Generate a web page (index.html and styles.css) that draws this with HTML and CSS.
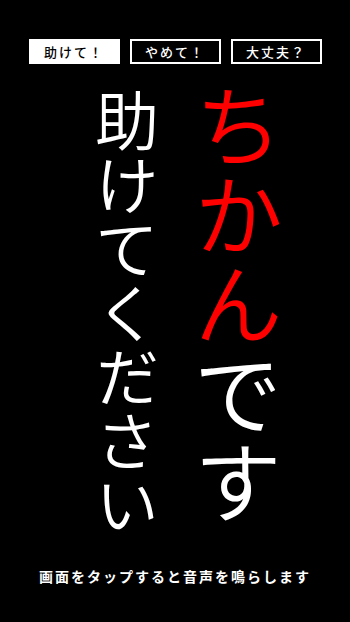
FILE: index.html
```html
<!DOCTYPE html>
<html lang="ja">
<head>
    <meta charset="UTF-8">
    <meta name="viewport" content="width=device-width, initial-scale=1.0">
    <title>ちかんです</title>
    <link rel="stylesheet" href="styles.css">
</head>
<body>

    <div class="tabs">
        <button class="tab active">助けて！</button>
        <button class="tab">やめて！</button>
        <button class="tab">大丈夫？</button>
    </div>

    <div class="message">
        <div class="line small">助けてください</div>
        <div class="line big"><span class="red">ちかん</span>です</div>
    </div>

    <div class="hint">画面をタップすると音声を鳴らします</div>

</body>
</html>
```
FILE: styles.css
```css
body {
    margin: 0;
    background: #000;
    color: #fff;
    font-family: "Noto Sans CJK JP", sans-serif;
    height: 622px;
    display: flex;
    flex-direction: column;
}

.tabs {
    display: flex;
    justify-content: center;
    gap: 10px;
    padding-top: 39px;
}

.tab {
    width: 91px;
    height: 25px;
    background: #000;
    color: #fff;
    border: 2px solid #fff;
    font-family: "Noto Sans CJK JP", sans-serif;
    font-size: 13px;
    font-weight: 500;
    padding: 0;
    letter-spacing: 2px;
}

.tab.active {
    background: #fff;
    color: #000;
}

.message {
    display: flex;
    flex-direction: row;
    align-items: flex-start;
    gap: 35px;
    padding-left: 95px;
    margin-top: 18px;
    height: 474px;
}

.line {
    writing-mode: vertical-rl;
    line-height: 1;
    font-weight: 350;
}

.small {
    font-size: 64px;
    margin-top: 7px;
}

.big {
    font-size: 89px;
}

.red {
    color: #f00;
}

.hint {
    text-align: center;
    font-size: 14px;
    font-weight: bold;
    letter-spacing: 2px;
    margin-top: 10px;
}
```
